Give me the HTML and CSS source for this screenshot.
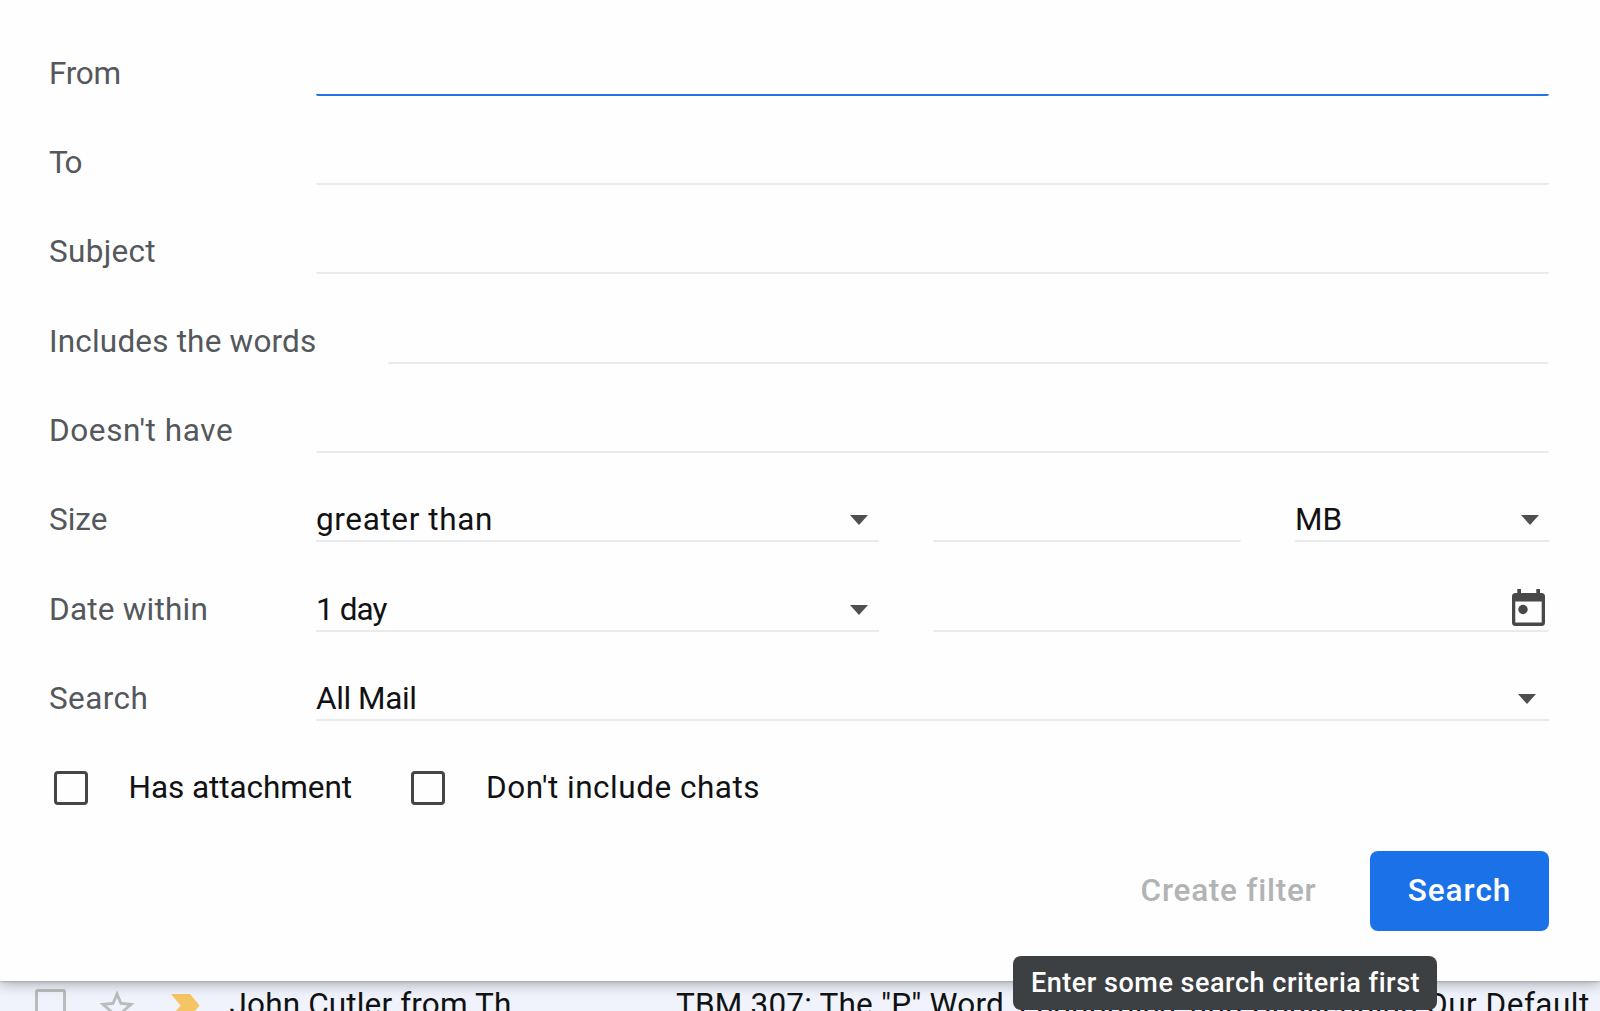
FILE: index.html
```
<!DOCTYPE html>
<html lang="en">
<head>
<meta charset="utf-8">
<title>Search mail</title>
<link rel="stylesheet" href="styles.css">
</head>
<body>
<form class="panel">
  <div class="row">
    <label class="label ls-from">From</label>
    <div class="field focused"></div>
  </div>
  <div class="row">
    <label class="label ls-to">To</label>
    <div class="field"></div>
  </div>
  <div class="row">
    <label class="label ls-subject">Subject</label>
    <div class="field"></div>
  </div>
  <div class="row">
    <label class="label wide ls-includes">Includes the words</label>
    <div class="field"></div>
  </div>
  <div class="row">
    <label class="label ls-have">Doesn't have</label>
    <div class="field"></div>
  </div>
  <div class="row">
    <label class="label">Size</label>
    <div class="field select operator"><span class="ls-than">greater than</span><svg class="arrow" viewBox="0 0 18 10"><path d="M0 0h18L9 10z"/></svg></div>
    <div class="field amount"></div>
    <div class="field select unit"><span>MB</span><svg class="arrow" viewBox="0 0 18 10"><path d="M0 0h18L9 10z"/></svg></div>
  </div>
  <div class="row">
    <label class="label ls-date">Date within</label>
    <div class="field select operator"><span class="ls-day">1 day</span><svg class="arrow" viewBox="0 0 18 10"><path d="M0 0h18L9 10z"/></svg></div>
    <div class="field date">
      <svg class="calendar" viewBox="0 0 33 37"><path fill-rule="evenodd" d="M5.300 0h3.700v4h15.300V0H28v4h1.500A3.500 3.500 0 0 1 33 7.500v26a3.500 3.500 0 0 1-3.500 3.500h-26A3.500 3.500 0 0 1 0 33.500v-26A3.500 3.500 0 0 1 3.500 4h1.800zM3.300 12.600v21h26.400v-21z"/><circle cx="11" cy="20.500" r="4.700"/></svg>
    </div>
  </div>
  <div class="row">
    <label class="label ls-search">Search</label>
    <div class="field select folder"><span class="ls-mail">All Mail</span><svg class="arrow" viewBox="0 0 18 10"><path d="M0 0h18L9 10z"/></svg></div>
  </div>
  <div class="checks">
    <label class="check attach"><i class="box"></i><span>Has attachment</span></label>
    <label class="check chats"><i class="box"></i><span class="ls-chats">Don't include chats</span></label>
  </div>
  <div class="actions">
    <span class="create">Create filter</span>
    <button class="submit" type="button">Search</button>
  </div>
  <div class="tooltip">Enter some search criteria first</div>
</form>
<div class="mail">
  <i class="mail-box"></i>
  <svg class="star" viewBox="0 0 24 24"><path d="M22 9.240l-7.190-.620L12 2 9.190 8.630 2 9.240l5.460 4.730L5.820 21 12 17.270 18.180 21l-1.630-7.030zM12 15.400l-3.760 2.270 1-4.280-3.320-2.880 4.380-.380L12 6.100l1.710 4.040 4.380.380-3.320 2.880 1 4.280z"/></svg>
  <svg class="important" viewBox="0 0 29 23"><path d="M0 0h19l9.500 11.500L19 23H0l9.500-11.500z"/></svg>
  <span class="sender">John Cutler from Th.</span>
  <span class="subject">TBM 307: The "P" Word, Economics, and Challenging</span>
  <span class="subject-end">Our Default</span>
</div>
</body>
</html>
```
FILE: styles.css
```
* { box-sizing: border-box; }

body {
  margin: 0;
  width: 1600px;
  height: 1011px;
  overflow: hidden;
  background: #f0f3fb;
  color: #111214;
  font: 31.5px/37px Roboto, sans-serif;
}

.panel {
  position: relative;
  z-index: 1;
  height: 981px;
  padding: 6.4px 51px 0 49px;
  background: #fefefe;
  box-shadow: 0 1px 2px rgba(0, 0, 0, .16), 0 4px 12px rgba(0, 0, 0, .26);
}

.row {
  display: flex;
  align-items: flex-end;
  height: 89.35px;
}

.label {
  flex: none;
  width: 267px;
  padding-bottom: 4.2px;
  color: #54585c;
  white-space: nowrap;
}

.label.wide { width: 338.5px; }

.field {
  flex: 1;
  height: 46px;
  border-bottom: 2px solid #e8eaed;
  border-radius: 2px;
}

.field.focused { border-bottom-color: #2571e8; }

.select {
  display: flex;
  justify-content: space-between;
  align-items: flex-end;
  padding-bottom: 2.2px;
  border-radius: 0;
}

.operator { flex: none; width: 563px; padding-right: 11.5px; }
.amount { flex: none; width: 308px; margin: 0 54px; }
.unit { padding-right: 10px; }
.folder { padding-right: 13px; }

.arrow {
  width: 18px;
  height: 10px;
  margin-bottom: 13px;
  fill: #4f4f4f;
}

.date {
  display: flex;
  justify-content: flex-end;
  margin-left: 54px;
  padding: 3.500px 4px 0 0;
}

.calendar { width: 33px; height: 37px; fill: #484848; }

.checks {
  display: flex;
  height: 129.800px;
  padding: 50px 0 0 5px;
}

.check {
  display: flex;
  align-items: flex-start;
}

.check span { margin-top: -2.500px; }
.attach { width: 357px; gap: 40.500px; letter-spacing: -.060px; }
.chats { gap: 41px; }

.box {
  width: 34px;
  height: 34px;
  border: 3.500px solid #454545;
  border-radius: 4px;
}

.actions {
  display: flex;
  justify-content: flex-end;
  align-items: center;
  height: 80px;
  gap: 53.500px;
}

.create {
  color: #b1b3b4;
  font-weight: 500;
  letter-spacing: .750px;
}

.submit {
  width: 179px;
  height: 80px;
  padding: 0;
  border: 0;
  border-radius: 8px;
  background: #1b72e8;
  color: #fff;
  font: 500 31.500px/37px Roboto, sans-serif;
  letter-spacing: 1px;
}

.tooltip {
  position: absolute;
  left: 1013px;
  top: 956px;
  width: 424px;
  height: 54px;
  padding-left: 18px;
  border-radius: 8px;
  background: #3c4043;
  color: #fff;
  font-size: 27px;
  font-weight: 500;
  line-height: 54px;
  letter-spacing: .520px;
  white-space: nowrap;
}

.mail {
  display: flex;
  align-items: flex-start;
  height: 30px;
  padding: 4px 0 0 35px;
  white-space: nowrap;
}

.mail > * { flex: none; }

.mail-box {
  width: 31px;
  height: 31px;
  margin-top: 4px;
  border: 3px solid #b9bcbc;
  border-radius: 3px;
}

.star {
  width: 42px;
  height: 42px;
  margin: 1.500px 0 0 30px;
  fill: #b9bcbc;
}

.important {
  width: 29px;
  height: 23px;
  margin: 9px 0 0 33px;
  fill: #f4c465;
}

.sender, .subject, .subject-end { margin-top: 1px; }

.sender {
  width: 446.500px;
  margin-left: 29.500px;
  letter-spacing: .150px;
}

.subject {
  width: 750px;
  overflow: hidden;
  letter-spacing: .200px;
}

.subject-end { letter-spacing: .500px; }

.ls-from { letter-spacing: -.300px; }
.ls-to { letter-spacing: -1.800px; }
.ls-subject { letter-spacing: .300px; }
.ls-includes { letter-spacing: .180px; }
.ls-have { letter-spacing: .600px; }
.ls-than { letter-spacing: .620px; }
.ls-date { letter-spacing: .220px; }
.ls-day { letter-spacing: -.900px; }
.ls-mail { letter-spacing: -.400px; }
.ls-search { letter-spacing: .400px; }
.ls-chats { letter-spacing: .500px; }
```
